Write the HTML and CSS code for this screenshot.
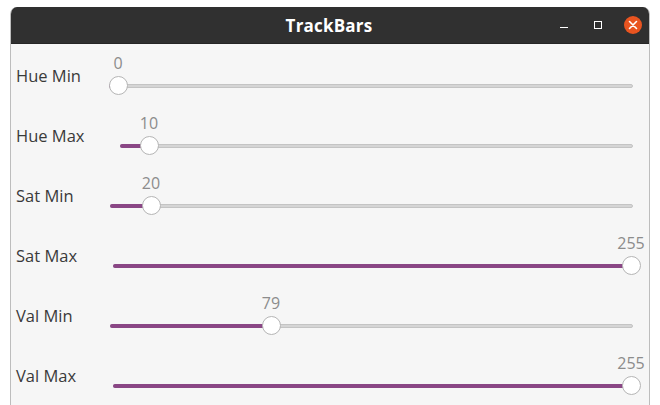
FILE: index.html
```html
<!DOCTYPE html>
<html>
<head>
<meta charset="utf-8">
<link rel="stylesheet" href="styles.css">
</head>
<body>
<div class="window">
  <div class="titlebar">
    <span class="title">TrackBars</span>
    <div class="controls">
      <span class="btn-min"></span>
      <span class="btn-max"></span>
      <span class="btn-close">
        <svg width="18" height="18" viewBox="0 0 18 18"><path d="M5.5 5.5 L12.5 12.5 M12.5 5.5 L5.5 12.5" stroke="#fff" stroke-width="1.6" stroke-linecap="round"/></svg>
      </span>
    </div>
  </div>
  <div class="content">
    <div class="row">
      <div class="label">Hue Min</div>
      <div class="scale s-hmin">
        <div class="trough"><div class="fill" style="width:9px"></div></div>
        <div class="knob" style="left:9px"><span class="value">0</span></div>
      </div>
    </div>
    <div class="row">
      <div class="label">Hue Max</div>
      <div class="scale s-hmax">
        <div class="trough"><div class="fill" style="width:29px"></div></div>
        <div class="knob" style="left:29px"><span class="value">10</span></div>
      </div>
    </div>
    <div class="row">
      <div class="label">Sat Min</div>
      <div class="scale s-smin">
        <div class="trough"><div class="fill" style="width:41px"></div></div>
        <div class="knob" style="left:41px"><span class="value">20</span></div>
      </div>
    </div>
    <div class="row">
      <div class="label">Sat Max</div>
      <div class="scale s-smax">
        <div class="trough"><div class="fill" style="width:518px"></div></div>
        <div class="knob" style="left:518px"><span class="value">255</span></div>
      </div>
    </div>
    <div class="row">
      <div class="label">Val Min</div>
      <div class="scale s-vmin">
        <div class="trough"><div class="fill" style="width:161px"></div></div>
        <div class="knob" style="left:161px"><span class="value">79</span></div>
      </div>
    </div>
    <div class="row">
      <div class="label">Val Max</div>
      <div class="scale s-vmax">
        <div class="trough"><div class="fill" style="width:518px"></div></div>
        <div class="knob" style="left:518px"><span class="value">255</span></div>
      </div>
    </div>
  </div>
</div>
</body>
</html>
```

FILE: styles.css
```css
html, body {
  margin: 0;
  padding: 0;
  background: #ffffff;
  width: 660px;
  height: 405px;
  overflow: hidden;
}
body {
  padding-top: 7px;
  padding-left: 10px;
  box-sizing: border-box;
  font-family: "Open Sans", "Noto Sans", sans-serif;
}
.window {
  width: 640px;
  height: 400px;
  border-radius: 7px 7px 0 0;
  overflow: hidden;
  background: #f6f6f6;
  border-left: 1px solid #bdbdbd;
  border-right: 1px solid #bdbdbd;
  box-sizing: border-box;
}
.titlebar {
  height: 37px;
  background: #303030;
  border-bottom: 1px solid #262626;
  box-sizing: border-box;
  position: relative;
  display: flex;
  align-items: center;
  justify-content: center;
}
.title {
  color: #ffffff;
  font-weight: 700;
  font-size: 17px;
  letter-spacing: 0.2px;
  margin-left: -2px;
}
.controls {
  position: absolute;
  right: 7px;
  top: 9px;
  display: flex;
  align-items: center;
}
.btn-min {
  width: 8px;
  height: 1px;
  background: #ffffff;
  margin-top: 4px;
  margin-right: 26px;
}
.btn-max {
  width: 6px;
  height: 6px;
  border: 1px solid #ffffff;
  margin-right: 22px;
}
.btn-close {
  width: 18px;
  height: 18px;
  border-radius: 50%;
  background: #e95420;
  display: flex;
}
.content {
  display: flex;
  flex-direction: column;
  padding-right: 16px;
}
.row {
  height: 60px;
  display: flex;
  align-items: flex-start;
}
.label {
  padding-left: 5px;
  padding-top: 21px;
  font-size: 16.5px;
  line-height: 22px;
  color: #3a3a3a;
}
.scale {
  margin-left: auto;
  height: 60px;
  position: relative;
}
.s-hmin { width: 524px; }
.s-hmax { width: 513px; }
.s-smin { width: 523px; }
.s-smax { width: 520px; }
.s-vmin { width: 523px; }
.s-vmax { width: 520px; }
.trough {
  margin-top: 40px;
  height: 4px;
  border-radius: 2px;
  background: #d5d5d5;
  border: 1px solid #c4c4c4;
  box-sizing: border-box;
  position: relative;
}
.fill {
  position: absolute;
  left: -1px;
  top: -1px;
  height: 4px;
  border-radius: 2px;
  background: #8a4785;
}
.knob {
  position: absolute;
  top: 32px;
  width: 19px;
  height: 19px;
  margin-left: -9.5px;
  border-radius: 50%;
  background: #ffffff;
  border: 1px solid #b5b5b5;
  box-sizing: border-box;
}
.value {
  position: absolute;
  left: 50%;
  bottom: 21px;
  transform: translateX(-50%);
  font-size: 16px;
  line-height: 20px;
  color: #8c8c8c;
  white-space: nowrap;
}
```
